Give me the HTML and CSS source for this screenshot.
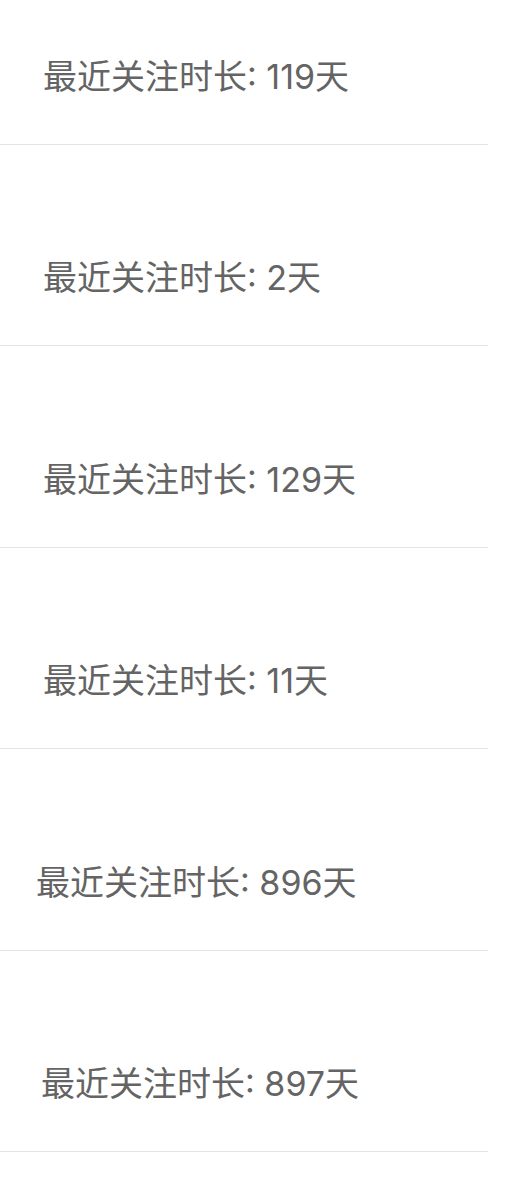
FILE: index.html
```html
<!DOCTYPE html>
<html lang="zh-CN">
  <head>
    <meta charset="UTF-8" />
    <title>关注列表</title>
    <meta name="viewport" content="width=device-width, initial-scale=1" />
    <link rel="stylesheet" href="styles.css">
  </head>

  <body>
    <ul class="follow-list">
      <li class="follow-item first">
        <span class="duration">最近关注时长: 119天</span>
      </li>
      <li class="follow-item">
        <span class="duration">最近关注时长: 2天</span>
      </li>
      <li class="follow-item">
        <span class="duration">最近关注时长: 129天</span>
      </li>
      <li class="follow-item">
        <span class="duration">最近关注时长: 11天</span>
      </li>
      <li class="follow-item">
        <span class="duration shift-more">最近关注时长: 896天</span>
      </li>
      <li class="follow-item">
        <span class="duration shift-less">最近关注时长: 897天</span>
      </li>
    </ul>
  </body>
</html>
```

FILE: styles.css
```css
body {
  margin: 0;
  background: #ffffff;
  font-family: Inter, "Noto Sans CJK SC", sans-serif;
}

.follow-list {
  list-style: none;
  margin: 0;
  padding: 0;
  width: 488px;
}

.follow-item {
  box-sizing: border-box;
  height: 201.4px;
  display: flex;
  align-items: flex-end;
  padding: 0 0 47px 43px;
  border-bottom: 1px solid #e4e4e4;
}

.follow-item.first {
  height: 145px;
}

.duration {
  font-size: 34px;
  line-height: 40px;
  color: #646464;
  white-space: nowrap;
}

.shift-more {
  margin-left: -7px;
}

.shift-less {
  margin-left: -2px;
}
```
